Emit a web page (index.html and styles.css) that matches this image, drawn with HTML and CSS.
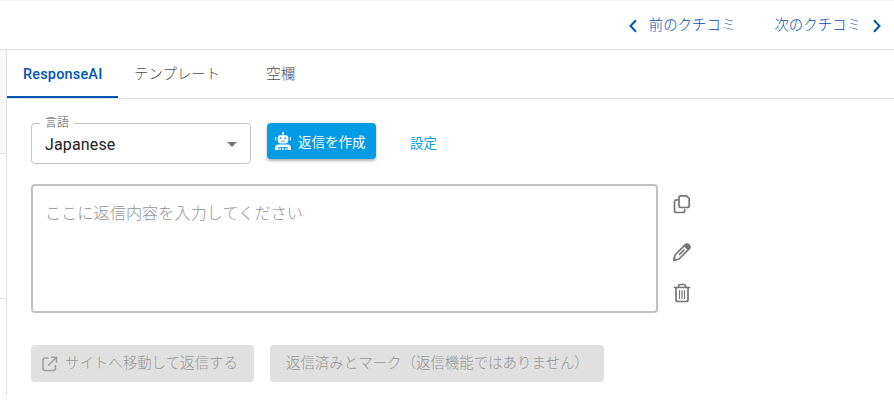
FILE: index.html
```
<!DOCTYPE html>
<html lang="ja">
<head>
<meta charset="utf-8">
<title>クチコミ返信</title>
<link rel="stylesheet" href="styles.css">
</head>
<body>
<header class="pager">
  <a class="pager-link"><svg width="8" height="14" viewBox="0 0 8 14"><path d="M7 1.300 1.500 7 7 12.700"/></svg><span>前のクチコミ</span></a>
  <a class="pager-link"><span>次のクチコミ</span><svg width="8" height="14" viewBox="0 0 8 14"><path d="M1 1.300 6.500 7 1 12.700"/></svg></a>
</header>
<div class="content">
  <aside class="rail"><div class="rail-item selected"></div><div class="rail-item"></div></aside>
  <main class="panel">
    <nav class="tabs">
      <a class="tab active">ResponseAI</a>
      <a class="tab">テンプレート</a>
      <a class="tab blank">空欄</a>
    </nav>
    <section class="composer">
      <div class="controls">
        <div class="select"><span class="select-label">言語</span><span class="select-value">Japanese</span><i class="caret"></i></div>
        <button class="create">
          <svg width="16" height="18" viewBox="0 0 16 18" fill="#fff"><circle cx="8" cy="1.200" r="1.100"/><path d="M7.500 2h1v2h-1zM.2 5h1v3.500h-1zM14.800 5h1v3.500h-1z"/><path fill-rule="evenodd" d="M5 3.300h6a2.300 2.300 0 0 1 2.300 2.300v2.600a3.300 3.300 0 0 1-3.300 3.300H6a3.300 3.300 0 0 1-3.300-3.300V5.600A2.300 2.300 0 0 1 5 3.300zM5.700 5.200a.9.9 0 1 0 0 1.800.9.9 0 0 0 0-1.800zm4.600 0a.9.9 0 1 0 0 1.800.9.9 0 0 0 0-1.800zM6 8.800v.7h4v-.7z"/><path fill-rule="evenodd" d="M3.500 12.500h9A3.500 3.500 0 0 1 16 16v2h-3.500v-3h-9v3H0v-2a3.500 3.500 0 0 1 3.500-3.500zM4.500 15.800h1.300V18H4.500zm2.800 0h1.400V18H7.300zm2.900 0h1.300V18h-1.300z"/></svg>
          <span>返信を作成</span>
        </button>
        <a class="settings">設定</a>
      </div>
      <div class="editor">
        <textarea class="reply" placeholder="ここに返信内容を入力してください"></textarea>
        <div class="tools">
          <svg width="18" height="20" viewBox="0 0 18 20"><path d="M8 1.800h5.500L16.200 4.500v7a2 2 0 0 1-2 2H8a2 2 0 0 1-2-2v-7.700a2 2 0 0 1 2-2zM4.300 5.800h-.8a2 2 0 0 0-2 2v8.700a2 2 0 0 0 2 2h6.200a2 2 0 0 0 2-2v-.8"/></svg>
          <svg width="20" height="20" viewBox="0 0 20 20"><path d="M1.700 18.300 3 13 13.300 2.700a2.400 2.400 0 0 1 3.400 0l.6.600a2.400 2.400 0 0 1 0 3.400L7 17zM7.500 12.500l4.500-4.500"/><path class="solid" d="m11.800 4.200 2-2c2-1.500 5.500 2 4 4l-2 2zM1.500 18.500l.8-3 2.200 2.200z"/></svg>
          <svg width="18" height="20" viewBox="0 0 18 20"><path d="M1.500 4.500h15M5.500 4.300V3a1.500 1.500 0 0 1 1.500-1.500h4A1.500 1.500 0 0 1 12.500 3v1.300M3 4.800v11.700a2 2 0 0 0 2 2h8a2 2 0 0 0 2-2V4.800"/><path class="thin" d="M6.500 7.500v8M9 7.500v8M11.500 7.500v8"/></svg>
        </div>
      </div>
      <div class="actions">
        <button class="action visit" disabled><svg width="16" height="16" viewBox="0 0 16 16"><path d="M6.500 2H3a2 2 0 0 0-2 2v8.500a2 2 0 0 0 2 2h8.500a2 2 0 0 0 2-2V9M9 1.200h5.500v5.500M14.200 1.500 6 9.700"/></svg><span>サイトへ移動して返信する</span></button>
        <button class="action mark" disabled>返信済みとマーク（返信機能ではありません）</button>
      </div>
    </section>
  </main>
</div>
</body>
</html>
```
FILE: styles.css
```
* { box-sizing: border-box; }
body {
  margin: 0;
  height: 418px;
  overflow: hidden;
  background: #fff;
  color: #505050;
  font: 300 14.450px/20px Roboto, "Noto Sans CJK JP", sans-serif;
}
button, textarea { font: inherit; margin: 0; border: 0; }
svg { flex: none; display: block; }
span, a, button { white-space: nowrap; }
.pager {
  height: 50px;
  display: flex;
  justify-content: flex-end;
  align-items: center;
  gap: 39px;
  padding: 2px 13px 0 0;
  border-top: 1px solid #f5f5f5;
  border-bottom: 1px solid #e0e0e0;
  color: #004fae;
}
.pager-link { display: flex; align-items: center; gap: 12px; }
.pager-link svg { fill: none; stroke: #0056b3; stroke-width: 2; }
.content { display: flex; height: 345px; }
.rail { width: 7px; border-right: 1px solid #e0e0e0; }
.rail-item { height: 145px; border-bottom: 1px solid #e0e0e0; }
.rail-item.selected { height: 104px; background: #fafafa; }
.panel { flex: 1; }
.tabs { height: 49px; display: flex; border-bottom: 1px solid #e0e0e0; }
.tab { height: 48px; padding: 1px 16px 0; line-height: 48px; }
.tab.active {
  width: 111px;
  border-bottom: 2px solid #0056b3;
  color: #0056b3;
  font-weight: 500;
  letter-spacing: .2px;
}
.tab.blank { margin-left: 14px; }
.composer { padding: 24px; }
.controls { display: flex; height: 41px; }
.select {
  position: relative;
  width: 220px;
  height: 41px;
  display: flex;
  align-items: center;
  justify-content: space-between;
  padding: 2px 13px 0;
  border: 1px solid #c4c4c4;
  border-radius: 4px;
}
.select-label {
  position: absolute;
  left: 8px;
  top: -9px;
  padding: 0 5px;
  background: #fff;
  font-size: 12px;
  line-height: 16px;
}
.select-value { color: #212121; font-size: 16px; font-weight: 400; letter-spacing: .15px; }
.caret { border: 5px solid transparent; border-top-color: #757575; border-bottom: 0; }
.create {
  width: 109px;
  height: 36px;
  margin-left: 16px;
  display: flex;
  align-items: center;
  gap: 7px;
  padding: 0 8px;
  border-radius: 4px;
  background: #039be5;
  color: #fff;
  box-shadow: 0 2px 3px rgba(0,0,0,.3);
  font-size: 13.500px;
  font-weight: 400;
}
.create span { padding-top: 2px; }
.settings { margin: 11px 0 0 34px; color: #039be5; font-size: 13.400px; font-weight: 400; }
.editor { display: flex; margin-top: 20px; }
.reply {
  display: block;
  width: 627px;
  height: 129px;
  padding: 16px 12px;
  border: 2px solid #c0c0c0;
  border-radius: 4px;
  resize: none;
  outline: 0;
  font-size: 16.200px;
  line-height: 24px;
}
.reply::placeholder { color: #949494; }
.tools { width: 20px; margin-left: 14px; padding-top: 10px; display: flex; flex-direction: column; align-items: center; }
.tools svg { fill: none; stroke: #757575; stroke-width: 1.7; stroke-linejoin: round; stroke-linecap: round; }
.tools svg + svg { margin-top: 28px; }
.tools svg:last-child { margin-top: 21px; }
.tools .solid { fill: #757575; stroke: none; }
.tools .thin { stroke-width: 1.2; }
.actions { display: flex; gap: 16px; margin-top: 32px; }
.action { height: 37px; padding: 0 16px; border-radius: 4px; background: #e0e0e0; color: #969696; }
.visit { width: 223px; display: flex; align-items: center; gap: 7px; padding: 0 11px; }
.visit svg { fill: none; stroke: #9e9e9e; stroke-width: 1.5; }
.mark { width: 334px; text-align: left; }
```
